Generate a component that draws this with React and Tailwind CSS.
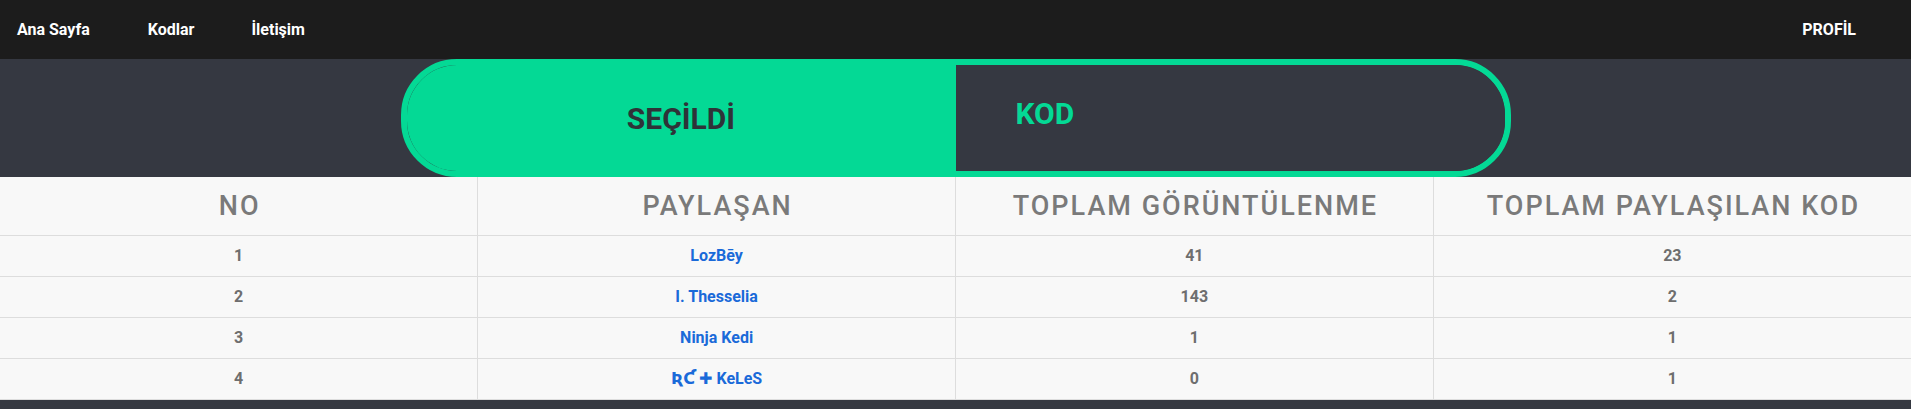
const users = [
  { no: 1, name: 'LozBēy', views: 41, codes: 23 },
  { no: 2, name: 'I. Thesselia', views: 143, codes: 2 },
  { no: 3, name: 'Ninja Kedi', views: 1, codes: 1 },
  { no: 4, name: 'ƦƇ ✚ KeLeS', views: 0, codes: 1 },
];

function Navbar() {
  return (
    <nav className="flex h-[59px] items-center justify-between bg-[#1c1c1c] text-[16px] font-bold text-white">
      <div className="flex items-center">
        <a className="pl-[17px] pr-[58px]">Ana Sayfa</a>
        <a className="pr-[57px]">Kodlar</a>
        <a>İletişim</a>
      </div>
      <a className="pr-[55px]">PROFİL</a>
    </nav>
  );
}

function Toggle() {
  return (
    <div className="flex h-[118px] w-[1110px] overflow-hidden rounded-[56px] border-[6px] border-[#04d995]">
      <button className="flex w-1/2 items-center justify-center bg-[#04d995] text-[30px] font-bold text-[#2e3338]">
        SEÇİLDİ
      </button>
      <button className="flex w-1/2 items-center bg-[#353841] pb-[10px] pl-[60px] text-[30px] font-bold text-[#04d995]">
        KOD
      </button>
    </div>
  );
}

export default function App() {
  return (
    <div className="min-h-screen bg-[#353841] font-['Roboto','DejaVu_Sans',sans-serif]">
      <Navbar />
      <section className="flex justify-center bg-[#353841]">
        <Toggle />
      </section>
      <table className="w-full table-fixed border-collapse bg-[#f8f8f8]">
        <thead>
          <tr className="h-[58px] border-b border-[#dddddd]">
            {['NO', 'PAYLAŞAN', 'TOPLAM GÖRÜNTÜLENME', 'TOPLAM PAYLAŞILAN KOD'].map((h, i) => (
              <th
                key={h}
                className={`pl-[2px] text-[27px] font-medium tracking-[2px] text-[#7a7a7a] ${i > 0 ? 'border-l border-[#dddddd]' : ''}`}
              >
                {h}
              </th>
            ))}
          </tr>
        </thead>
        <tbody className="text-[16px] font-bold">
          {users.map((u) => (
            <tr key={u.no} className="h-[41px] border-b border-[#dddddd] text-center">
              <td className="text-[#6e6e6e]">{u.no}</td>
              <td className="border-l border-[#dddddd] text-[#1a6ad9]">{u.name}</td>
              <td className="border-l border-[#dddddd] text-[#6e6e6e]">{u.views}</td>
              <td className="border-l border-[#dddddd] text-[#6e6e6e]">{u.codes}</td>
            </tr>
          ))}
        </tbody>
      </table>
      <div className="h-[40px] bg-[#353841]" />
    </div>
  );
}
